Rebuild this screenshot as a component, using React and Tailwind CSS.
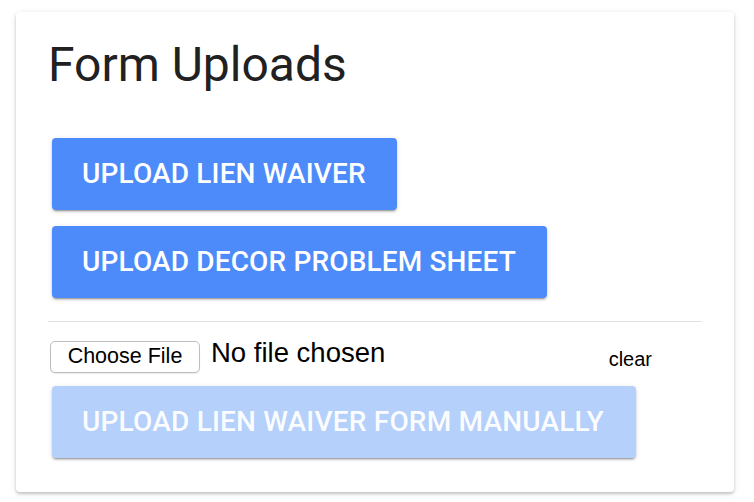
export default function App() {
    const raised =
        'shadow-[0_3px_1px_-2px_rgba(0,0,0,0.2),0_2px_2px_0_rgba(0,0,0,0.14),0_1px_5px_0_rgba(0,0,0,0.12)]';

    return (
        <div className="w-[754px] h-[502px] bg-white pt-3 pl-4">
            <div
                className="w-[718px] h-[480px] bg-white rounded-[4px] px-8 pt-[29px] flex flex-col shadow-[0_2px_3px_0_rgba(0,0,0,0.18),0_1px_6px_0_rgba(0,0,0,0.1)]"
            >
                <h1 className="font-['Roboto',sans-serif] text-[48px] leading-none font-normal text-[#212121] h-12">
                    Form Uploads
                </h1>

                <div className="mx-1 mt-[49px] flex flex-col items-start gap-4">
                    <button
                        type="button"
                        className={`h-[72px] pl-[30px] pr-[31px] flex items-center rounded-[4px] bg-[#4d8bfa] text-white font-['Roboto',sans-serif] font-medium text-[28px] tracking-[0.15px] leading-none ${raised}`}
                    >
                        UPLOAD LIEN WAIVER
                    </button>
                    <button
                        type="button"
                        className={`h-[72px] pl-[30px] pr-[31px] flex items-center rounded-[4px] bg-[#4d8bfa] text-white font-['Roboto',sans-serif] font-medium text-[28px] tracking-[0.15px] leading-none ${raised}`}
                    >
                        UPLOAD DECOR PROBLEM SHEET
                    </button>
                </div>

                <div className="mt-[23px] h-px bg-[#e3e3e3]" />

                {/* file picker row */}
                <div className="mt-[17px] flex items-start font-['Liberation_Sans',Arial,sans-serif]">
                    <span className="ml-[2px] mt-[2px] h-8 w-[150px] flex items-center justify-center rounded-[5px] border border-[#bdbdbd] bg-white text-[21.5px] leading-none text-black shadow-[0_1px_1px_rgba(0,0,0,0.08)]">
                        Choose File
                    </span>
                    <span className="ml-[11px] text-[27.5px] leading-none text-black">No file chosen</span>
                    <span className="ml-auto mr-[50px] mt-[10px] text-[20px] leading-none text-black">clear</span>
                </div>

                <div className="mx-1 mt-[13px] flex">
                    <button
                        type="button"
                        disabled
                        className={`h-[72px] pl-[30px] pr-[32px] flex items-center rounded-[4px] bg-[#b5d0fa] text-white/95 font-['Roboto',sans-serif] font-medium text-[28px] tracking-[0.2px] leading-none ${raised}`}
                    >
                        UPLOAD LIEN WAIVER FORM MANUALLY
                    </button>
                </div>
            </div>
        </div>
    );
}
